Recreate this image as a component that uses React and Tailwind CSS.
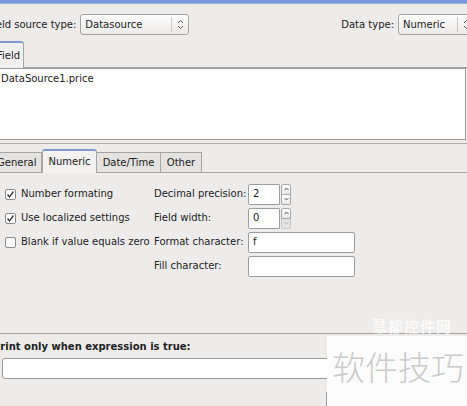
import React from 'react';

const font = { fontFamily: '"DejaVu Sans", Verdana, sans-serif' };

function UpDown({ className = '' }) {
    return (
        <svg width="7" height="11" viewBox="0 0 7 11" className={className}>
            <path d="M1 4 L3.5 1.5 L6 4" fill="none" stroke="#555" strokeWidth="1" />
            <path d="M1 7 L3.5 9.5 L6 7" fill="none" stroke="#555" strokeWidth="1" />
        </svg>
    );
}

function Combo({ text, className = '' }) {
    return (
        <div className={`h-[21px] flex items-center border border-[#a5a5a5] rounded-[3px] bg-gradient-to-b from-[#fdfdfd] to-[#ecebea] ${className}`}>
            <span className="flex-1 pl-[4px] text-[#222]">{text}</span>
            <div className="h-[15px] w-px bg-[#c9c9c9]" />
            <div className="w-[16px] flex justify-center">
                <UpDown />
            </div>
        </div>
    );
}

function Check({ checked, label }) {
    return (
        <div className="flex items-center h-[24px] pl-[5px]">
            <div className="w-[11px] h-[11px] border border-[#8c8c8c] rounded-[2px] bg-white flex items-center justify-center">
                {checked && (
                    <svg width="9" height="9" viewBox="0 0 9 9">
                        <path d="M1.5 4.5 L3.5 7 L7.5 1.5" fill="none" stroke="#333" strokeWidth="1.3" />
                    </svg>
                )}
            </div>
            <span className="ml-[5px] text-[#222]">{label}</span>
        </div>
    );
}

function SpinBox({ value, downDisabled }) {
    return (
        <div className="flex items-stretch h-[21px] w-[43px]">
            <div className="flex-1 border border-[#9d9d9d] rounded-l-[2px] bg-white flex items-center pl-[4px] text-[#222]">{value}</div>
            <div className="w-[10px] flex flex-col ml-px">
                <div className="flex-1 border border-[#a8a8a8] rounded-t-[2px] bg-gradient-to-b from-white to-[#e8e8e8] flex items-center justify-center">
                    <svg width="5" height="4" viewBox="0 0 5 4"><path d="M0.5 3 L2.5 1 L4.5 3" fill="none" stroke="#555" /></svg>
                </div>
                <div className={`flex-1 border border-t-0 rounded-b-[2px] flex items-center justify-center ${downDisabled ? 'border-[#c8c8c8] bg-[#e3e3e3]' : 'border-[#a8a8a8] bg-gradient-to-b from-white to-[#e8e8e8]'}`}>
                    <svg width="5" height="4" viewBox="0 0 5 4"><path d="M0.5 1 L2.5 3 L4.5 1" fill="none" stroke={downDisabled ? '#bbb' : '#555'} /></svg>
                </div>
            </div>
        </div>
    );
}

function Field({ value }) {
    return (
        <div className="h-[21px] w-[107px] border border-[#9d9d9d] rounded-[2px] bg-white flex items-center pl-[4px] text-[#222]">{value}</div>
    );
}

export default function App() {
    return (
        <div className="w-[467px] h-[406px] overflow-hidden relative bg-[#edeceb] text-[10px] leading-[12px]" style={font}>
            {/* title bar */}
            <div className="h-[4px] bg-[#7b98de] border-b border-[#9fb4e6]" />

            {/* source type row */}
            <div className="flex items-center h-[21px] mt-[10px]">
                <span className="-ml-[12px] text-[#222]">Field source type:</span>
                <Combo text="Datasource" className="ml-[4px] w-[109px]" />
                <span className="ml-auto text-[#222]">Data type:</span>
                <Combo text="Numeric" className="ml-[4px] w-[77px] -mr-[8px]" />
            </div>

            {/* field tab */}
            <div className="flex items-end h-[27px] mt-[6px]">
                <div className="h-full -ml-[8px] w-[32px] border border-b-0 border-[#a6a6a6] border-t-[#7f98d2] border-t-2 rounded-tr-[3px] bg-[#f2f1f0] flex items-center pl-[4px] text-[#222]">
                    Field
                </div>
                <div className="flex-1 border-b border-[#a6a6a6]" />
            </div>
            <div className="-ml-[2px] w-[468px] h-[72px] border border-[#9a9a9a] bg-white pl-[2px] pt-[4px] text-[#222]">
                DataSource1.price
            </div>
            <div className="h-[3px]" />
            <div className="border-t border-[#b0b0b0]" />

            {/* numeric tabs */}
            <div className="flex items-end h-[24px] mt-[5px]">
                <div className="h-[21px] -ml-[10px] w-[52px] border border-[#a6a6a6] bg-[#e4e3e1] flex items-center pl-[6px] text-[#222]">General</div>
                <div className="h-[24px] w-[55px] border border-b-0 border-[#a6a6a6] border-t-2 border-t-[#7f98d2] rounded-t-[3px] bg-[#f3f2f1] flex items-center justify-center text-[#222]">Numeric</div>
                <div className="h-[21px] w-[64px] border border-l-0 border-[#a6a6a6] bg-[#e4e3e1] flex items-center justify-center text-[#222]">Date/Time</div>
                <div className="h-[21px] w-[41px] border border-l-0 border-[#a6a6a6] bg-[#e4e3e1] flex items-center justify-center text-[#222]">Other</div>
                <div className="flex-1 border-b border-[#a6a6a6]" />
            </div>
            <div className="h-[161px] border-b border-[#a6a6a6] pt-[9px] flex">
                <div className="w-[154px] flex flex-col">
                    <Check checked label="Number formating" />
                    <Check checked label="Use localized settings" />
                    <Check label="Blank if value equals zero" />
                </div>
                <div className="flex flex-col">
                    <div className="flex items-center h-[24px]">
                        <span className="w-[94px] text-[#222]">Decimal precision:</span>
                        <SpinBox value="2" />
                    </div>
                    <div className="flex items-center h-[24px]">
                        <span className="w-[94px] text-[#222]">Field width:</span>
                        <SpinBox value="0" downDisabled />
                    </div>
                    <div className="flex items-center h-[24px]">
                        <span className="w-[94px] text-[#222]">Format character:</span>
                        <Field value="f" />
                    </div>
                    <div className="flex items-center h-[24px]">
                        <span className="w-[94px] text-[#222]">Fill character:</span>
                        <Field value="" />
                    </div>
                </div>
            </div>

            {/* print condition */}
            <div className="mt-[7px] -ml-[7px] font-bold text-[#222]">Print only when expression is true:</div>
            <div className="mt-[5px] ml-[2px] w-[340px] h-[21px] border border-[#9a9a9a] rounded-l-[3px] bg-white" />

            {/* watermark */}
            <div className="absolute left-[372px] top-[318px] text-[15px] font-bold text-white/70 leading-[16px] tracking-[1px]" style={{ fontFamily: '"Noto Sans CJK SC", sans-serif' }}>
                慧都控件网
            </div>
            <div className="absolute left-[327px] top-[336px] w-[140px] h-[70px] bg-[#fcfcfc] flex items-start pl-[5px] pt-[12px]">
                <span className="text-[33px] leading-[36px] font-light text-[#cbcbcb]" style={{ fontFamily: '"Noto Sans CJK SC", sans-serif' }}>软件技巧</span>
            </div>
            <div className="absolute left-[326px] top-[392px] w-px h-[14px] bg-[#9a9a9a]" />
        </div>
    );
}
